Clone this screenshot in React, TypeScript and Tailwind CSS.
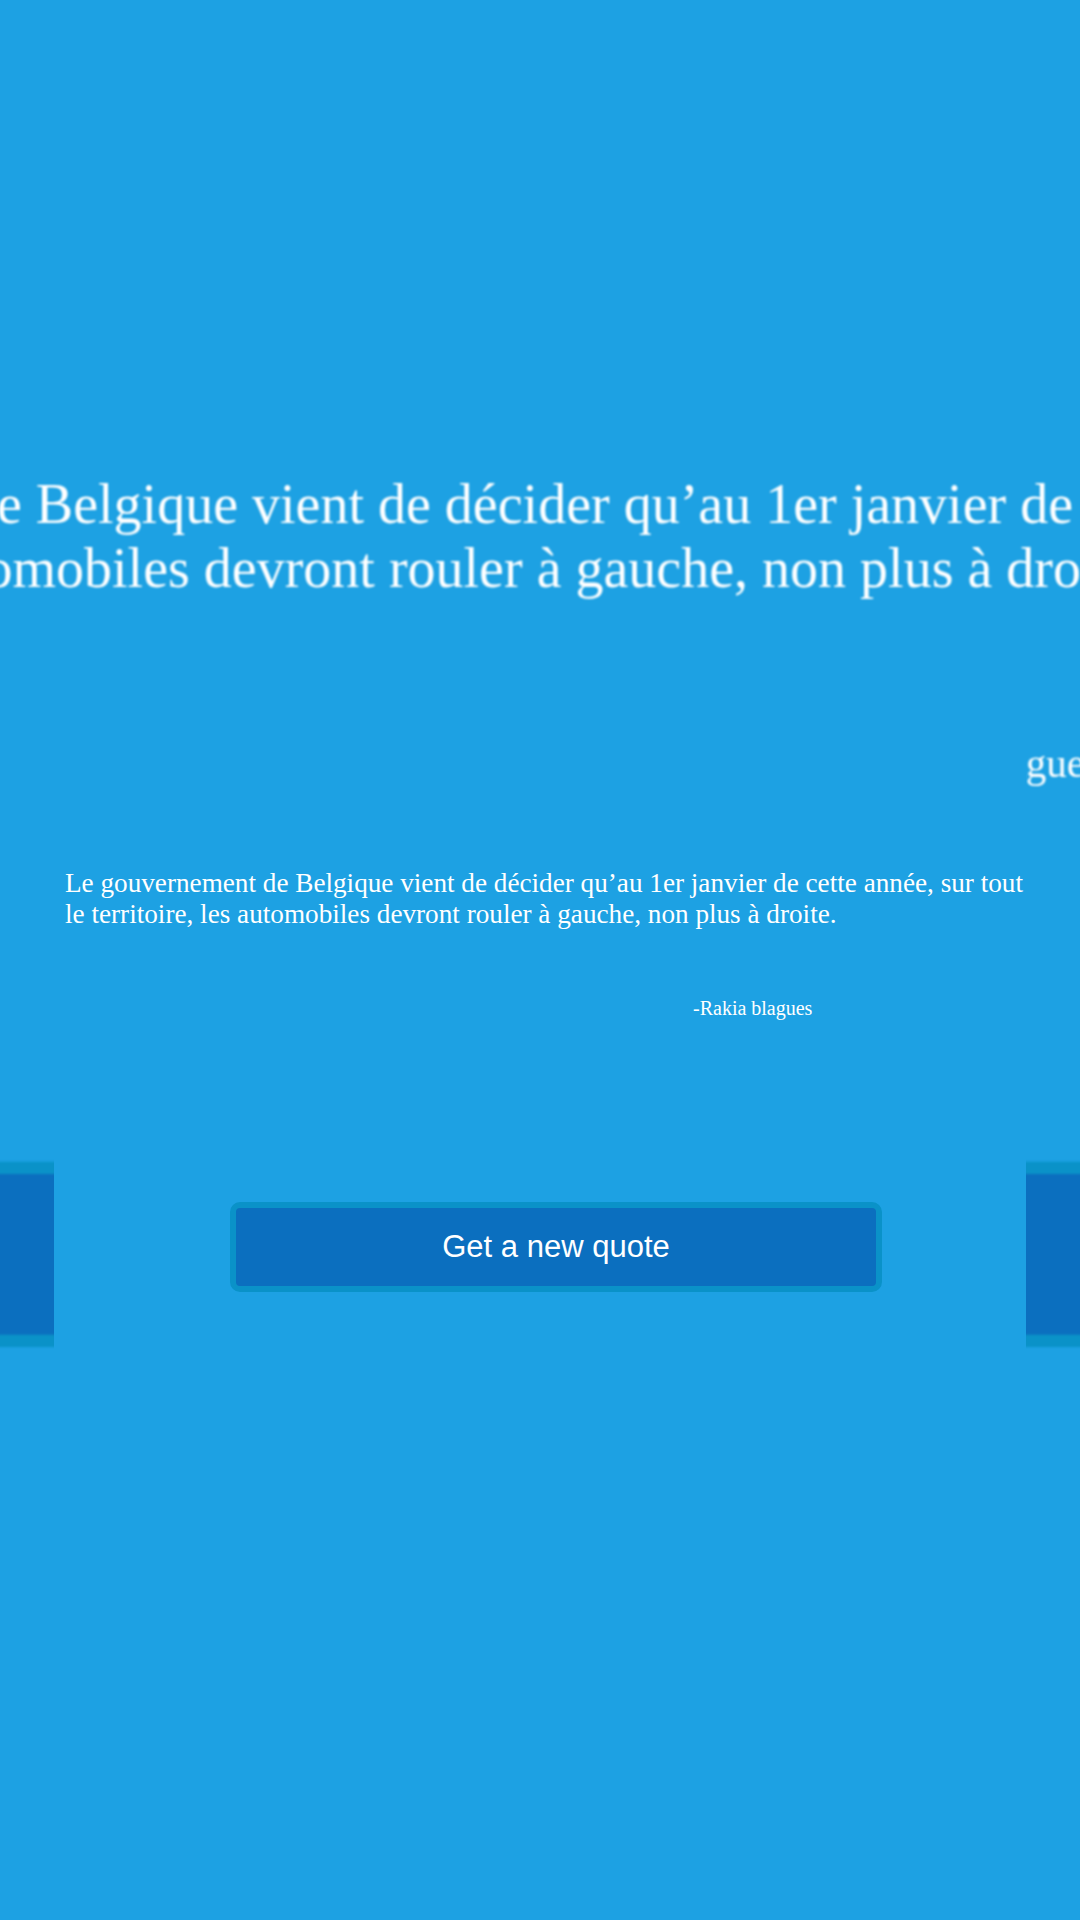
import React from "react";

function Content() {
  return (
    <div className="flex flex-col items-start">
      <p className="ml-[11px] w-[975px] font-['Liberation_Serif','Times_New_Roman',serif] text-[27.2px] leading-[31px] text-white">
        Le gouvernement de Belgique vient de décider qu’au 1er janvier de cette année, sur tout le territoire, les automobiles devront rouler à gauche, non plus à droite.
      </p>
      <p className="ml-[639px] mt-[67px] font-['Liberation_Serif','Times_New_Roman',serif] text-[20px] leading-[23px] text-white whitespace-nowrap">
        -Rakia blagues
      </p>
      <button
        type="button"
        className="ml-[176px] mt-[182px] flex h-[90px] w-[652px] items-center justify-center rounded-[10px] border-[6px] border-[#0a92c8] bg-[#0b6fbf] font-['Liberation_Sans',Arial,sans-serif] text-[31px] text-white"
      >
        Get a new quote
      </button>
    </div>
  );
}

export default function App() {
  return (
    <div className="relative h-[1920px] w-full overflow-hidden bg-[#1da1e3]">
      {/* enlarged, softened backdrop copy of the quote box */}
      <div
        aria-hidden="true"
        className="pointer-events-none absolute inset-0 origin-[540px_1240px] scale-[2.06] blur-[0.6px]"
      >
        <div className="mx-[54px] mt-[680px] pt-[188px]">
          <Content />
        </div>
      </div>

      {/* foreground card */}
      <div className="relative mx-[54px] mt-[680px] bg-[#1da1e3] pt-[188px] pb-[120px]">
        <Content />
      </div>
    </div>
  );
}
